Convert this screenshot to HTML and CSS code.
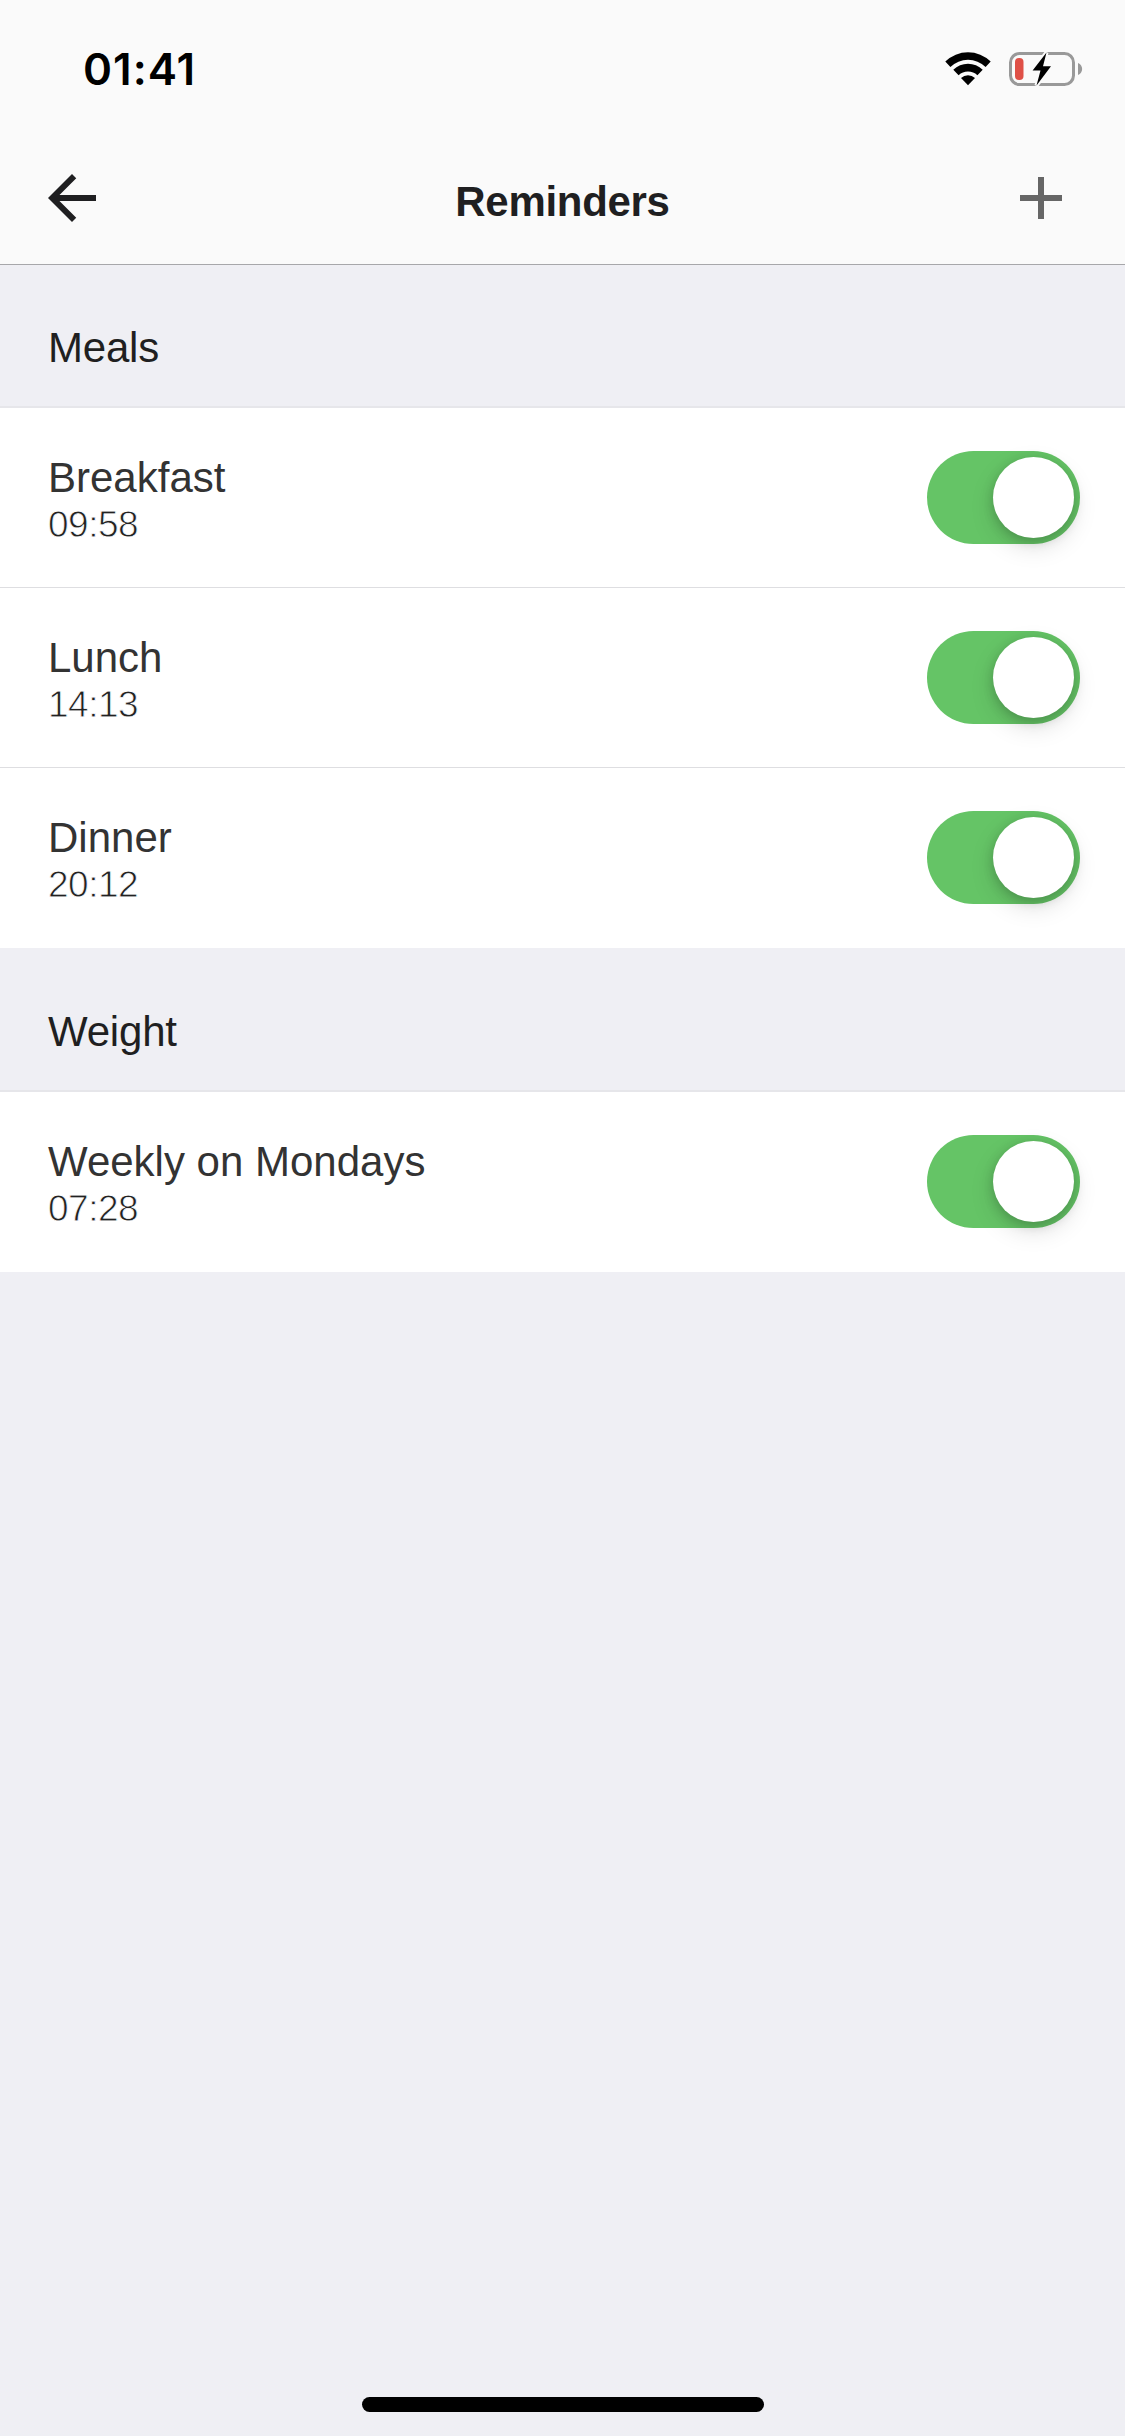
FILE: index.html
```html
<!DOCTYPE html>
<html lang="en">
<head>
  <meta charset="utf-8">
  <title>Reminders</title>
  <meta name="viewport" content="width=device-width, initial-scale=1">
  <link rel="stylesheet" href="styles.css">
</head>
<body>
  <header class="header">
    <div class="status-bar">
      <span class="clock">01:41</span>
      <div class="status-icons">
        <svg class="wifi" width="46" height="34" viewBox="0 0 46 34">
          <path d="M0.3 9.6A32.5 32.5 0 0 1 45.7 9.6L40.6 15A25.2 25.2 0 0 0 5.4 15Z"/>
          <path d="M8.3 17.7A21 21 0 0 1 37.7 17.7L32.4 23.2A13.6 13.6 0 0 0 13.6 23.2Z"/>
          <path d="M16 26A10.5 10.5 0 0 1 30 26L23 33.2Z"/>
        </svg>
        <svg class="battery" width="74" height="34" viewBox="0 0 74 34">
          <rect x="1.5" y="1.5" width="63" height="31" rx="9" fill="none" stroke="#999" stroke-width="3"/>
          <path d="M69 11C74.5 13 74.5 21 69 23Z" fill="#999"/>
          <rect x="6" y="6" width="8.5" height="22" rx="4" fill="#df5047"/>
          <path class="bolt" d="M37.5 0.5L23.6 18.5H31.5L27.5 33.5L42 14.3H34Z"/>
        </svg>
      </div>
    </div>
    <nav class="nav-bar">
      <svg class="nav-icon back" viewBox="0 0 24 24"><path d="M20 11H7.83l5.59-5.59L12 4l-8 8 8 8 1.41-1.41L7.83 13H20v-2z"/></svg>
      <h1>Reminders</h1>
      <svg class="nav-icon add" viewBox="0 0 24 24"><path d="M19 13h-6v6h-2v-6H5v-2h6V5h2v6h6v2z"/></svg>
    </nav>
  </header>

  <main>
    <h2 class="first">Meals</h2>
    <ul>
      <li>
        <div class="info">
          <div class="name">Breakfast</div>
          <div class="time">09:58</div>
        </div>
        <div class="toggle"><div class="knob"></div></div>
      </li>
      <li>
        <div class="info">
          <div class="name">Lunch</div>
          <div class="time">14:13</div>
        </div>
        <div class="toggle"><div class="knob"></div></div>
      </li>
      <li>
        <div class="info">
          <div class="name">Dinner</div>
          <div class="time">20:12</div>
        </div>
        <div class="toggle"><div class="knob"></div></div>
      </li>
    </ul>

    <h2>Weight</h2>
    <ul>
      <li>
        <div class="info">
          <div class="name">Weekly on Mondays</div>
          <div class="time">07:28</div>
        </div>
        <div class="toggle"><div class="knob"></div></div>
      </li>
    </ul>
  </main>

  <div class="home-indicator"></div>
</body>
</html>
```

FILE: styles.css
```css
* {
  box-sizing: border-box;
}

body {
  margin: 0;
  height: 2436px;
  display: flex;
  flex-direction: column;
  background-color: #efeff4;
  font-family: "Liberation Sans", Arial, sans-serif;
  overflow: hidden;
}

.header {
  height: 265px;
  background-color: #fafafa;
  border-bottom: 1px solid #a7a7aa;
}

.status-bar {
  height: 132px;
  display: flex;
  justify-content: space-between;
  padding: 42px 42px 0 83px;
}

.clock {
  font-family: Inter, sans-serif;
  font-size: 44px;
  font-weight: 600;
  line-height: 54px;
  letter-spacing: 1px;
  color: #000;
}

.status-icons {
  display: flex;
  gap: 18px;
  padding-top: 10px;
}

.bolt {
  stroke: #fafafa;
  stroke-width: 4px;
  paint-order: stroke;
}

.nav-bar {
  height: 132px;
  display: flex;
  align-items: center;
  justify-content: space-between;
  padding: 0 48px 0 36px;
}

.nav-icon {
  width: 72px;
  height: 72px;
}

.back {
  fill: #1f1f21;
}

.add {
  fill: #666;
}

h1 {
  margin: 8px 0 0 12px;
  font-size: 42px;
  line-height: 48px;
  letter-spacing: -0.3px;
  color: #1f1f21;
}

h2 {
  margin: 0;
  height: 144px;
  padding: 60px 48px 0;
  border-bottom: 2px solid #e6e6ea;
  font-size: 42px;
  font-weight: normal;
  line-height: 48px;
  letter-spacing: -0.2px;
  color: #1f1f21;
}

h2.first {
  height: 143px;
  padding-top: 59px;
}

ul {
  margin: 0;
  padding: 0;
  list-style: none;
}

li {
  height: 180px;
  display: flex;
  justify-content: space-between;
  padding: 43px 45px 0 48px;
  background-color: #fff;
  border-bottom: 1px solid #dedee1;
}

li:last-child {
  border-bottom: none;
}

.name {
  padding-top: 1px;
  font-size: 42px;
  line-height: 52px;
  color: #333;
}

.time {
  font-size: 37px;
  line-height: 42px;
  letter-spacing: -0.5px;
  color: #222;
  /* thins the strokes, there is no light weight of this font */
  -webkit-text-stroke: 0.8px #fff;
}

.toggle {
  width: 153px;
  height: 93px;
  padding: 6px;
  display: flex;
  justify-content: flex-end;
  border-radius: 46.5px;
  background-color: #65c466;
}

.knob {
  width: 81px;
  height: 81px;
  border-radius: 50%;
  background-color: #fff;
  box-shadow: 0 9px 24px rgba(0, 0, 0, 0.13), 0 3px 12px rgba(0, 0, 0, 0.18);
}

.home-indicator {
  width: 402px;
  height: 15px;
  margin: auto auto 24px;
  border-radius: 8px;
  background-color: #000;
}
```
